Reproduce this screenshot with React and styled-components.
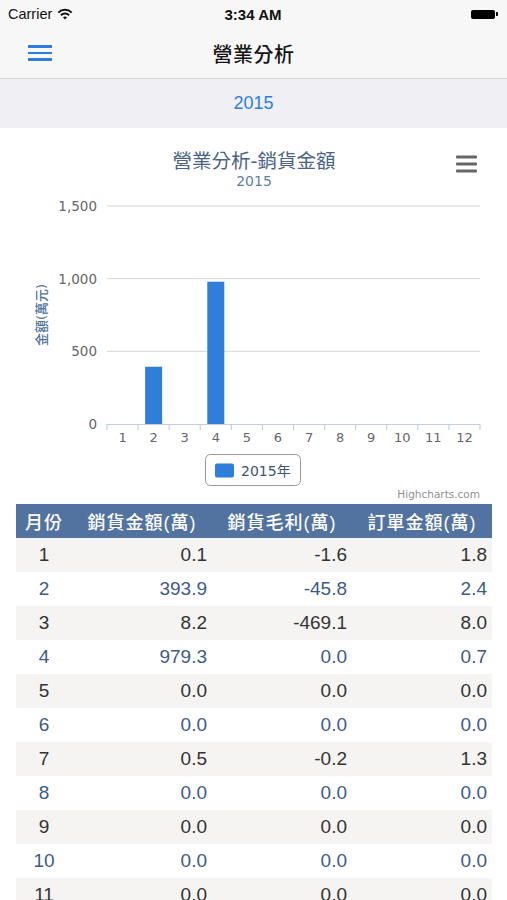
import React from 'react'
import styled, { createGlobalStyle } from 'styled-components'

const GlobalStyle = createGlobalStyle`
  body {
    margin: 0;
    background: #fff;
    font-family: "Liberation Sans", "Noto Sans CJK TC", sans-serif;
  }
`

const Screen = styled.div`
  width: 507px;
  min-height: 900px;
  background: #fff;
  overflow: hidden;
`

const StatusBar = styled.div`
  height: 28px;
  display: grid;
  grid-template-columns: 1fr auto 1fr;
  align-items: center;
  padding: 0 9px 0 8px;
  background: #f7f7f7;
  font-size: 14.5px;
  color: #111;
`

const Carrier = styled.div`
  display: flex;
  align-items: center;
  gap: 5px;
`

const Clock = styled.div`
  font-weight: bold;
  font-size: 15px;
`

const Battery = styled.div`
  justify-self: end;
  display: flex;
  align-items: center;
`

const BatteryBody = styled.div`
  width: 24px;
  height: 9px;
  background: #000;
  border-radius: 2px;
`

const BatteryNub = styled.div`
  width: 2px;
  height: 4px;
  margin-left: 1px;
  background: #000;
  border-radius: 0 1px 1px 0;
`

const NavBar = styled.div`
  height: 50px;
  display: grid;
  grid-template-columns: 1fr auto 1fr;
  align-items: center;
  background: #f7f7f7;
  border-bottom: 1px solid #d6d6d9;
`

const MenuButton = styled.button`
  justify-self: start;
  margin-left: 28px;
  padding: 0;
  border: 0;
  background: none;
  display: flex;
  flex-direction: column;
  gap: 4px;

  span {
    display: block;
    width: 24px;
    height: 2.5px;
    background: #2b7de1;
  }
`

const NavTitle = styled.div`
  font-size: 20px;
  font-weight: 500;
  color: #151515;
  letter-spacing: 0.5px;
`

const YearBar = styled.div`
  height: 49px;
  display: flex;
  align-items: center;
  justify-content: center;
  background: #efeff4;
  color: #2d80dd;
  font-size: 18px;
`

const ChartBox = styled.div`
  height: 376px;

  svg {
    display: block;
    font-family: "DejaVu Sans", "Noto Sans CJK TC", sans-serif;
  }
`

const Table = styled.table`
  margin: 0 15px 0 16px;
  width: 476px;
  border-collapse: collapse;
  table-layout: fixed;
`

const HeadCell = styled.th`
  height: 34px;
  padding: 0;
  background: #52739f;
  color: #fff;
  font-size: 18px;
  font-weight: 500;
  letter-spacing: 1px;
  text-align: center;
  width: ${p => p.$w}px;
`

const Row = styled.tr`
  background: ${p => (p.$odd ? '#f5f4f2' : '#fff')};
  color: ${p => (p.$odd ? '#333' : '#3d5b88')};
`

const Cell = styled.td`
  height: 34px;
  padding: 0 ${p => (p.$center ? 0 : 5)}px 0 0;
  font-size: 19px;
  text-align: ${p => (p.$center ? 'center' : 'right')};
`

const rows = [
  ['1', '0.1', '-1.6', '1.8'],
  ['2', '393.9', '-45.8', '2.4'],
  ['3', '8.2', '-469.1', '8.0'],
  ['4', '979.3', '0.0', '0.7'],
  ['5', '0.0', '0.0', '0.0'],
  ['6', '0.0', '0.0', '0.0'],
  ['7', '0.5', '-0.2', '1.3'],
  ['8', '0.0', '0.0', '0.0'],
  ['9', '0.0', '0.0', '0.0'],
  ['10', '0.0', '0.0', '0.0'],
  ['11', '0.0', '0.0', '0.0'],
  ['12', '0.0', '0.0', '0.0'],
]

const sales = rows.map(r => parseFloat(r[1]))

function Wifi() {
  return (
    <svg width="16" height="12" viewBox="0 0 16 12">
      <path d="M1.3 4.6 A9.5 9.5 0 0 1 14.7 4.6" fill="none" stroke="#111" strokeWidth="2" />
      <path d="M3.9 7.2 A5.8 5.8 0 0 1 12.1 7.2" fill="none" stroke="#111" strokeWidth="2" />
      <path d="M6 9.6 L8 11.6 L10 9.6 A2.8 2.8 0 0 0 6 9.6 Z" fill="#111" />
    </svg>
  )
}

function SalesChart() {
  const left = 107
  const right = 480
  const zero = 424
  const top = 206
  const step = (right - left) / 12
  const scale = (zero - top) / 1500
  const grid = [
    [1500, '1,500'],
    [1000, '1,000'],
    [500, '500'],
    [0, '0'],
  ]

  return (
    <svg width="507" height="376" viewBox="0 128 507 376">
      <text x="254" y="168" textAnchor="middle" fontSize="19.5" fill="#4a6384">營業分析-銷貨金額</text>
      <text x="254" y="186" textAnchor="middle" fontSize="14" fill="#5f7fa3">2015</text>

      <g fill="#666">
        <rect x="456" y="155.5" width="21" height="3" rx="1" />
        <rect x="456" y="162.5" width="21" height="3" rx="1" />
        <rect x="456" y="169.5" width="21" height="3" rx="1" />
      </g>

      {grid.map(([v, label]) => {
        const y = zero - v * scale
        return (
          <g key={v}>
            {v > 0 && <line x1={left} x2={right} y1={y} y2={y} stroke="#d5d5d5" strokeWidth="1" />}
            <text x="97" y={y + 5} textAnchor="end" fontSize="13.5" fill="#666">{label}</text>
          </g>
        )
      })}

      <text
        x="42"
        y="315"
        transform="rotate(-90 42 315)"
        textAnchor="middle"
        dominantBaseline="middle"
        fontSize="13"
        fontWeight="500"
        fill="#4d759e"
      >
        金額(萬元)
      </text>

      {sales.map((v, i) => {
        const h = v * scale
        if (h < 2) return null
        const cx = left + step * (i + 0.5)
        return <rect key={i} x={cx - 8.5} y={zero - h} width="17" height={h} fill="#2f7ed8" />
      })}

      <line x1={left} x2={right} y1={zero + 0.5} y2={zero + 0.5} stroke="#c0d0e0" strokeWidth="1.2" />
      {Array.from({ length: 13 }, (_, i) => (
        <line
          key={i}
          x1={left + step * i}
          x2={left + step * i}
          y1={zero}
          y2={zero + 6}
          stroke="#c0d0e0"
          strokeWidth="1.2"
        />
      ))}
      {Array.from({ length: 12 }, (_, i) => (
        <text key={i} x={left + step * (i + 0.5)} y="442" textAnchor="middle" fontSize="13" fill="#666">
          {i + 1}
        </text>
      ))}

      <rect x="205.5" y="454.5" width="95" height="31" rx="5" fill="#fff" stroke="#999" strokeWidth="1" />
      <rect x="215" y="463.5" width="19" height="14" rx="2" fill="#2f7ed8" />
      <text x="241" y="475.5" fontSize="14" fill="#3b5675">2015年</text>

      <text x="480" y="498" textAnchor="end" fontSize="10.5" fill="#909090">Highcharts.com</text>
    </svg>
  )
}

export default function App() {
  return (
    <Screen>
      <GlobalStyle />
      <StatusBar>
        <Carrier>
          Carrier <Wifi />
        </Carrier>
        <Clock>3:34 AM</Clock>
        <Battery>
          <BatteryBody />
          <BatteryNub />
        </Battery>
      </StatusBar>
      <NavBar>
        <MenuButton aria-label="menu">
          <span />
          <span />
          <span />
        </MenuButton>
        <NavTitle>營業分析</NavTitle>
        <div />
      </NavBar>
      <YearBar>2015</YearBar>
      <ChartBox>
        <SalesChart />
      </ChartBox>
      <Table>
        <thead>
          <tr>
            <HeadCell $w={56}>月份</HeadCell>
            <HeadCell $w={140}>銷貨金額(萬)</HeadCell>
            <HeadCell $w={140}>銷貨毛利(萬)</HeadCell>
            <HeadCell $w={140}>訂單金額(萬)</HeadCell>
          </tr>
        </thead>
        <tbody>
          {rows.map((r, i) => (
            <Row key={r[0]} $odd={i % 2 === 0}>
              <Cell $center>{r[0]}</Cell>
              <Cell>{r[1]}</Cell>
              <Cell>{r[2]}</Cell>
              <Cell>{r[3]}</Cell>
            </Row>
          ))}
        </tbody>
      </Table>
    </Screen>
  )
}
